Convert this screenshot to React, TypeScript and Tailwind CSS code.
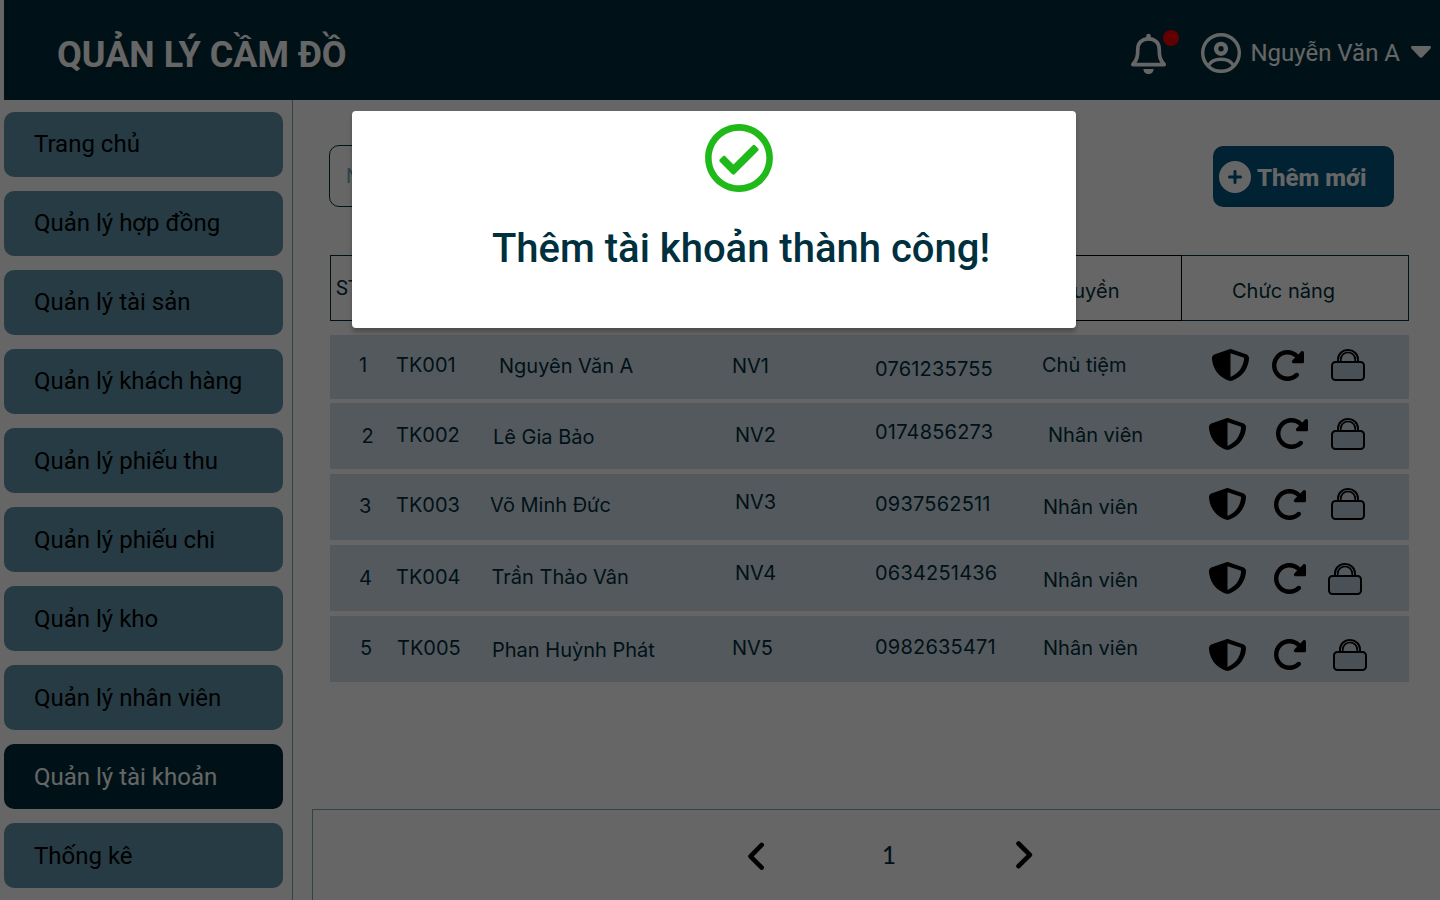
import React from "react";
import { FaRegCheckCircle } from "react-icons/fa";
import { FaCirclePlus } from "react-icons/fa6";

type Cell = { text: string; cls: string };
type Row = { box: string; cells: Cell[]; icons: [string, string, string] };

const menu = [
  { label: "Trang chủ", cls: "pb-[2px] bg-[#5f94aa] text-black" },
  { label: "Quản lý hợp đồng", cls: "pb-[2px] bg-[#5f94aa] text-black" },
  { label: "Quản lý tài sản", cls: "pb-[2px] bg-[#5f94aa] text-black" },
  { label: "Quản lý khách hàng", cls: "pb-[2px] bg-[#5f94aa] text-black" },
  { label: "Quản lý phiếu thu", cls: "bg-[#5f94aa] text-black" },
  { label: "Quản lý phiếu chi", cls: "bg-[#5f94aa] text-black" },
  { label: "Quản lý kho", cls: "bg-[#5f94aa] text-black" },
  { label: "Quản lý nhân viên", cls: "bg-[#5f94aa] text-black" },
  { label: "Quản lý tài khoản", cls: "bg-[#002f3d] text-white" },
  { label: "Thống kê", cls: "bg-[#5f94aa] text-black" },
];

const rows: Row[] = [
  {
    box: "h-16 mb-1",
    cells: [
      { text: "1", cls: "pl-[29px] pt-[18px]" },
      { text: "TK001", cls: "pl-[6px] pt-[18px]" },
      { text: "Nguyên Văn A", cls: "pl-[14px] pt-[19px]" },
      { text: "NV1", cls: "pl-[12px] pt-[19px]" },
      { text: "0761235755", cls: "pl-[5px] pt-[22px] tracking-[0.2px]" },
      { text: "Chủ tiệm", cls: "pl-[7px] pt-[18px]" },
    ],
    icons: ["pl-[12px] pt-[14px]", "pl-[7px] pt-[15px]", "pl-[11px] pt-[14px]"],
  },
  {
    box: "h-[66px] mb-[5px]",
    cells: [
      { text: "2", cls: "pl-[31.500px] pt-[21px]" },
      { text: "TK002", cls: "pl-[6px] pt-[20px]" },
      { text: "Lê Gia Bảo", cls: "pl-[8px] pt-[22px]" },
      { text: "NV2", cls: "pl-[15px] pt-[20px]" },
      { text: "0174856273", cls: "pl-[5px] pt-[17px] tracking-[0.2px]" },
      { text: "Nhân viên", cls: "pl-[13px] pt-[20px]" },
    ],
    icons: ["pl-[9px] pt-[15px]", "pl-[11px] pt-[15px]", "pl-[11px] pt-[15px]"],
  },
  {
    box: "h-[66px] mb-[5px]",
    cells: [
      { text: "3", cls: "pl-[29px] pt-[20px]" },
      { text: "TK003", cls: "pl-[6px] pt-[19px]" },
      { text: "Võ Minh Đức", cls: "pl-[5px] pt-[19px]" },
      { text: "NV3", cls: "pl-[15px] pt-[16px]" },
      { text: "0937562511", cls: "pl-[5px] pt-[18px] tracking-[0.2px]" },
      { text: "Nhân viên", cls: "pl-[8px] pt-[21px]" },
    ],
    icons: ["pl-[9px] pt-[14px]", "pl-[9px] pt-[15px]", "pl-[11px] pt-[14px]"],
  },
  {
    box: "h-[66px] mb-[5px]",
    cells: [
      { text: "4", cls: "pl-[29px] pt-[21px]" },
      { text: "TK004", cls: "pl-[6px] pt-[20px]" },
      { text: "Trần Thảo Vân", cls: "pl-[6.500px] pt-[20px]" },
      { text: "NV4", cls: "pl-[15px] pt-[16px]" },
      { text: "0634251436", cls: "pl-[5px] pt-[16px] tracking-[0.2px]" },
      { text: "Nhân viên", cls: "pl-[8px] pt-[23px]" },
    ],
    icons: ["pl-[9px] pt-[17px]", "pl-[9px] pt-[18px]", "pl-[8px] pt-[18px]"],
  },
  {
    box: "h-[66px]",
    cells: [
      { text: "5", cls: "pl-[30px] pt-[20px]" },
      { text: "TK005", cls: "pl-[7px] pt-[20px]" },
      { text: "Phan Huỳnh Phát", cls: "pl-[7px] pt-[22px]" },
      { text: "NV5", cls: "pl-[12px] pt-[20px]" },
      { text: "0982635471", cls: "pl-[5px] pt-[19px] tracking-[0.2px]" },
      { text: "Nhân viên", cls: "pl-[8px] pt-[20px]" },
    ],
    icons: ["pl-[9px] pt-[23px]", "pl-[9px] pt-[23px]", "pl-[13px] pt-[23px]"],
  },
];

function Shield() {
  return (
    <svg className="h-8 w-[37px]" viewBox="16 0 480 510" preserveAspectRatio="none" fill="#000">
      <path d="M256 0c4.6 0 9.2 1 13.4 2.9L457.7 82.8c22 9.3 38.4 31 38.3 57.2c-.5 99.2-41.3 280.7-213.6 363.2c-16.7 8-36.1 8-52.8 0C57.3 420.7 16.5 239.2 16 140c-.1-26.2 16.3-47.9 38.3-57.2L242.7 2.9C246.8 1 251.4 0 256 0zm0 66.8V444.8C394 378 431.1 230.1 432 141.4L256 66.8l0 0z" />
    </svg>
  );
}

function Rotate() {
  return (
    <svg className="h-[31px] w-8" viewBox="32 32 464 448" preserveAspectRatio="none" fill="#000">
      <path d="M463.5 224H472c13.3 0 24-10.7 24-24V72c0-9.7-5.8-18.5-14.8-22.2s-19.3-1.7-26.2 5.2L413.4 96.6c-87.6-86.5-228.7-86.2-315.8 1c-87.5 87.5-87.5 229.3 0 316.8s229.3 87.5 316.8 0c12.5-12.5 12.5-32.8 0-45.3s-32.8-12.5-45.3 0c-62.5 62.5-163.8 62.5-226.3 0s-62.5-163.8 0-226.3c62.2-62.2 162.7-62.5 225.3-1L327 183c-6.9 6.9-8.9 17.2-5.2 26.2s12.5 14.8 22.2 14.8H463.5z" />
    </svg>
  );
}

function Lock() {
  return (
    <svg className="h-8 w-[34px]" viewBox="0 0 34 32" fill="none" stroke="#000">
      <path d="M7 13V10.500C7 5 11.300 1 17 1s10 4 10 9.500V13" strokeWidth="2" />
      <path d="M9.700 13V11C9.700 6.600 12.700 3.500 17 3.500s7.300 3.100 7.300 7.500v2" strokeWidth="1.700" />
      <rect x="1" y="13" width="32" height="18" rx="3.500" strokeWidth="2" fill="#bacad8" />
    </svg>
  );
}

function Header() {
  return (
    <header className="ml-1 flex h-[100px] items-start bg-[#002f3d] text-white">
      <h1 className="ml-[53px] mt-[34px] text-[36px] font-bold leading-[42px] [text-shadow:0_4px_4px_rgba(0,0,0,0.25)]">
        QUẢN LÝ CẦM ĐỒ
      </h1>
      <div className="ml-auto flex items-start">
        <svg className="mt-[29px] h-[46px] w-[50px]" viewBox="0 0 50 46" fill="none">
          <path d="M18.500 7v2" stroke="#fff" strokeWidth="4.600" strokeLinecap="round" />
          <path
            d="M18.500 9.800C12 9.800 7.800 14 7.800 20C7.800 27.500 7 31 2.800 35.600H34.200C30 31 29.200 27.500 29.200 20C29.200 14 25 9.800 18.500 9.800Z"
            stroke="#fff"
            strokeWidth="3.700"
            strokeLinejoin="round"
          />
          <path d="M13.400 40h10.200c0 3-2.300 5-5.100 5s-5.100-2-5.100-5Z" fill="#fff" />
          <circle cx="41" cy="9" r="8" fill="#f00000" />
        </svg>
        <svg className="ml-[21px] mt-[33px] size-10" viewBox="0 0 40 40" fill="none" stroke="#fff" strokeWidth="3.400">
          <circle cx="20" cy="20" r="18.300" />
          <circle cx="20" cy="15.800" r="4.900" strokeWidth="4.400" />
          <path d="M7.500 32.500C10 28 14.500 26.300 20 26.300s10 1.700 12.500 6.200" />
        </svg>
        <span className="ml-[9px] mt-[39px] text-2xl leading-[28px]">Nguyễn Văn A</span>
        <svg className="ml-[11px] mr-[9px] mt-[45px] h-[14px] w-5" viewBox="0 0 20 14" fill="#fff">
          <path d="M1.500 1h17c1.400 0 1.900 1.500 1 2.500l-8 8.600c-.9.900-2.100.900-3 0l-8-8.600C-.4 2.500.1 1 1.500 1Z" />
        </svg>
      </div>
    </header>
  );
}

function Sidebar() {
  return (
    <nav className="flex w-[293px] shrink-0 flex-col gap-[14px] border-r border-[#79a8ba] pl-1 pt-3">
      {menu.map((m) => (
        <div
          key={m.label}
          className={`flex h-[65px] w-[279px] shrink-0 items-center rounded-[10px] pl-[30px] text-2xl ${m.cls}`}
        >
          {m.label}
        </div>
      ))}
    </nav>
  );
}

function Table() {
  return (
    <div className="ml-[37px] mt-12 w-[1079px] font-['Inter',sans-serif] text-xl leading-6 text-[#002f3d]">
      <div className="mb-[14px] flex h-[66px]">
        <div className="w-[60px] border-y border-l border-[#002f3d] pl-[5px] pt-5 font-['Roboto',sans-serif]">STT</div>
        <div className="flex-1 border-y border-black" />
        <div className="w-[192px] border-y border-r border-black pl-[68px] pt-[23px]">Quyền</div>
        <div className="w-[227px] border-y border-r border-[#002f3d] pl-[50px] pt-[23px]">Chức năng</div>
      </div>
      {rows.map((r) => (
        <div
          key={r.cells[0].text}
          className={`grid grid-cols-[60px_95px_235px_150px_165px_165px_65px_55px_89px] bg-[#d2dee8] ${r.box}`}
        >
          {r.cells.map((c) => (
            <div key={c.text} className={`whitespace-nowrap ${c.cls}`}>
              {c.text}
            </div>
          ))}
          <div className={r.icons[0]}>
            <Shield />
          </div>
          <div className={r.icons[1]}>
            <Rotate />
          </div>
          <div className={r.icons[2]}>
            <Lock />
          </div>
        </div>
      ))}
    </div>
  );
}

export default function App() {
  return (
    <div className="relative h-[900px] w-[1440px] overflow-hidden bg-white font-['Roboto',sans-serif]">
      <Header />
      <div className="flex h-[800px]">
        <Sidebar />
        <main className="flex min-w-0 flex-1 flex-col">
          <div className="ml-9 mr-[46px] mt-[45px] flex h-[62px] items-start justify-between">
            <div className="flex h-[62px] w-[400px] items-center rounded-[10px] border border-[#002f3d] pl-4 text-xl text-[#79a8ba]">
              Nhập
            </div>
            <button className="mt-px flex h-[61px] w-[181px] items-center rounded-[10px] bg-[#005580] pl-[6px] text-2xl font-extrabold text-white">
              <FaCirclePlus className="size-8" />
              <span className="ml-[6px] mt-[2px]">Thêm mới</span>
            </button>
          </div>
          <Table />
          <footer className="ml-[19px] mt-auto flex h-[91px] items-start border-l border-t border-[#79a8ba]">
            <svg className="ml-[435px] mt-[32px] h-7 w-[17px]" viewBox="0 0 17 28" fill="none" stroke="#000" strokeWidth="4.600" strokeLinecap="round" strokeLinejoin="round">
              <path d="M13.700 2.900L2.500 14.300L13.700 25.600" />
            </svg>
            <span className="ml-[117px] mt-[30px] w-[14px] font-['Lato',sans-serif] text-2xl font-medium leading-[30px] text-[#002f3d]">1</span>
            <svg className="ml-[120px] mt-[31px] h-7 w-[17px]" viewBox="0 0 17 28" fill="none" stroke="#000" strokeWidth="4.600" strokeLinecap="round" strokeLinejoin="round">
              <path d="M2.500 2.500L13.900 13.800L2.500 25.200" />
            </svg>
          </footer>
        </main>
      </div>
      <div className="absolute inset-0 flex items-start bg-black/60 pl-[352px] pt-[111px]">
        <div className="flex h-[217px] w-[724px] flex-col items-center rounded-[4px] bg-white shadow-[0_4px_4px_rgba(0,0,0,0.25)]">
          <FaRegCheckCircle className="ml-[49px] mt-3 size-[70px] text-[#1fba1a]" />
          <p className="ml-[54px] mt-[32px] text-[40px] font-medium leading-[47px] text-[#002f3d]">Thêm tài khoản thành công!</p>
        </div>
      </div>
    </div>
  );
}
